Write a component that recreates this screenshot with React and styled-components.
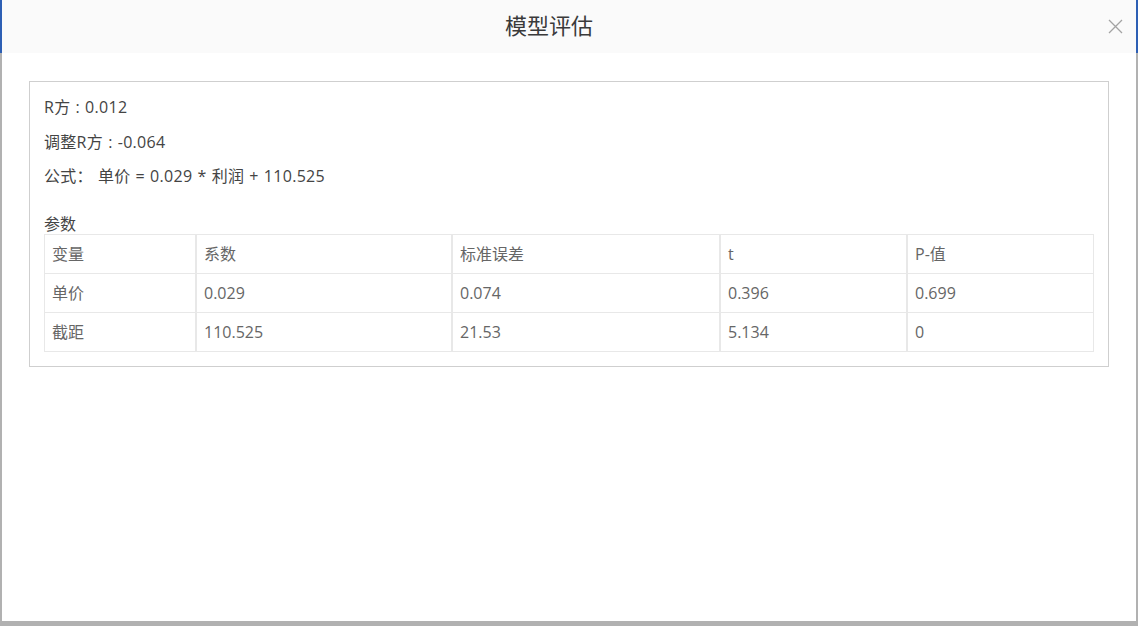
import React from 'react'
import styled, { createGlobalStyle } from 'styled-components'

const GlobalStyle = createGlobalStyle`
  html, body {
    margin: 0;
    padding: 0;
    background: #b1b1b1;
  }
  body {
    font-family: "Open Sans", "Noto Sans CJK SC", sans-serif;
  }
`

const params = [
  { name: '单价', coef: '0.029', se: '0.074', t: '0.396', p: '0.699' },
  { name: '截距', coef: '110.525', se: '21.53', t: '5.134', p: '0' },
]

const columns = [
  { key: 'name', label: '变量', width: 152 },
  { key: 'coef', label: '系数', width: 256 },
  { key: 'se', label: '标准误差', width: 268 },
  { key: 't', label: 't', width: 187 },
  { key: 'p', label: 'P-值', width: 187 },
]

function CloseIcon() {
  return (
    <svg width="15" height="15" viewBox="0 0 15 15" fill="none">
      <path d="M1 1 L14 14 M14 1 L1 14" stroke="#a3a3a3" strokeWidth="1.3" />
    </svg>
  )
}

export default function App() {
  return (
    <>
      <GlobalStyle />
      <Page>
        <Modal>
          <Header>
            <Title>模型评估</Title>
            <CloseButton aria-label="close">
              <CloseIcon />
            </CloseButton>
          </Header>

          <Body>
            <Panel>
              <InfoLine>R方 : 0.012</InfoLine>
              <InfoLine>调整R方 : -0.064</InfoLine>
              <InfoLine>公式： 单价 = 0.029 * 利润 + 110.525</InfoLine>

              <SectionLabel>参数</SectionLabel>
              <Table>
                <colgroup>
                  {columns.map((c) => (
                    <col key={c.key} style={{ width: c.width }} />
                  ))}
                </colgroup>
                <thead>
                  <tr>
                    {columns.map((c) => (
                      <Cell as="th" key={c.key}>
                        {c.label}
                      </Cell>
                    ))}
                  </tr>
                </thead>
                <tbody>
                  {params.map((row) => (
                    <tr key={row.name}>
                      {columns.map((c) => (
                        <Cell key={c.key}>{row[c.key]}</Cell>
                      ))}
                    </tr>
                  ))}
                </tbody>
              </Table>
            </Panel>
          </Body>
        </Modal>
      </Page>
    </>
  )
}

const Page = styled.div`
  height: 626px;
  box-sizing: border-box;
  padding: 0 2px 5px 2px;
  background:
    linear-gradient(#2d5fb4, #2d5fb4) left top / 2px 53px no-repeat,
    linear-gradient(#2d5fb4, #2d5fb4) right top / 2px 53px no-repeat,
    #b1b1b1;
  display: flex;
`

const Modal = styled.div`
  flex: 1;
  display: flex;
  flex-direction: column;
  background: #ffffff;
`

const Header = styled.div`
  position: relative;
  height: 53px;
  flex: 0 0 auto;
  box-sizing: border-box;
  padding: 0 40px 5px 0;

  display: flex;
  align-items: center;
  justify-content: center;

  background: #fafafa;
`

const Title = styled.div`
  font-family: "Noto Sans CJK SC", sans-serif;
  font-size: 22px;
  color: #3a3a3a;
  line-height: 30px;
`

const CloseButton = styled.button`
  position: absolute;
  right: 13px;
  top: 19px;
  padding: 0;
  border: none;
  background: transparent;
  display: flex;
  cursor: pointer;
`

const Body = styled.div`
  padding: 28px 27px 0 27px;
`

const Panel = styled.div`
  border: 1px solid #cfcfcf;
  padding: 15px 14px 14px 14px;
`

const InfoLine = styled.div`
  font-size: 16px;
  line-height: 20px;
  color: #444444;
  letter-spacing: 0.3px;
  word-spacing: 0.6px;
  margin-bottom: 14.5px;
`

const SectionLabel = styled.div`
  font-size: 16px;
  line-height: 20px;
  color: #444444;
  margin-top: 28px;
`

const Table = styled.table`
  width: 100%;
  table-layout: fixed;
  border-collapse: separate;
  border-spacing: 0;
  border-top: 1px solid #e8e8e8;
`

const Cell = styled.td`
  text-align: left;
  font-weight: normal;
  font-size: 16px;
  line-height: 22px;
  color: #666666;
  padding: 8px 7px;
  border-left: 1px solid #e8e8e8;
  border-right: 1px solid #e8e8e8;
  border-bottom: 1px solid #e8e8e8;
  white-space: nowrap;
`
